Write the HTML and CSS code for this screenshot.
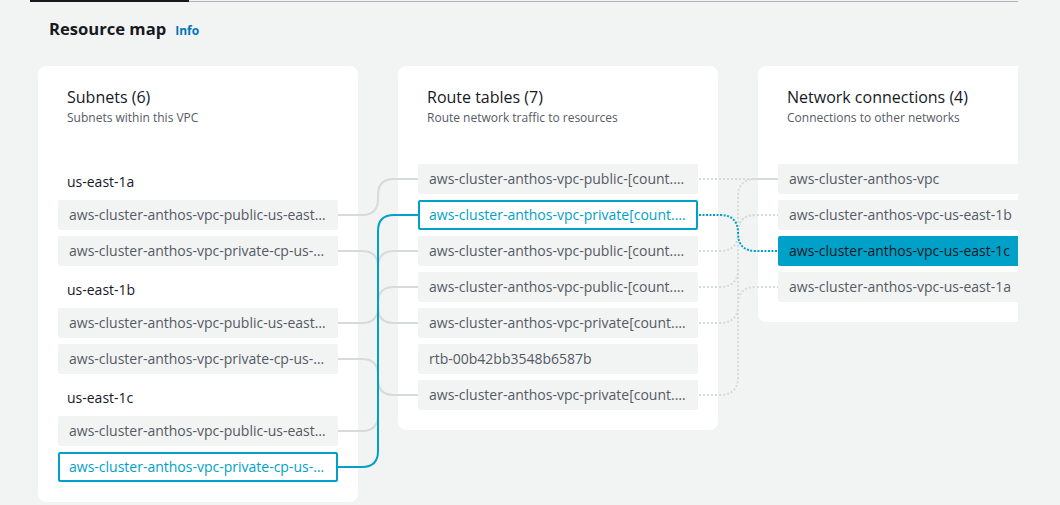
FILE: index.html
```html
<!DOCTYPE html>
<html lang="en">
<head>
<meta charset="utf-8">
<title>Resource map</title>
<link rel="stylesheet" href="styles.css">
</head>
<body>
<div class="page">
  <div class="tabs-rule"><span class="tab-active"></span><span class="tab-rest"></span></div>
  <div class="section-header">
    <h2 class="section-title">Resource map</h2>
    <a class="info-link" href="#">Info</a>
  </div>
  <div class="map">
    <section class="card">
      <header class="card-header">
        <h3 class="card-title">Subnets (6)</h3>
        <p class="card-subtitle">Subnets within this VPC</p>
      </header>
      <div class="list">
        <div class="group-label">us-east-1a</div>
        <div class="item">aws-cluster-anthos-vpc-public-us-east-1a</div>
        <div class="item">aws-cluster-anthos-vpc-private-cp-us-east-1a</div>
        <div class="group-label">us-east-1b</div>
        <div class="item">aws-cluster-anthos-vpc-public-us-east-1b</div>
        <div class="item">aws-cluster-anthos-vpc-private-cp-us-east-1b</div>
        <div class="group-label">us-east-1c</div>
        <div class="item">aws-cluster-anthos-vpc-public-us-east-1c</div>
        <div class="item item-outline">aws-cluster-anthos-vpc-private-cp-us-east-1c</div>
      </div>
    </section>
    <section class="card">
      <header class="card-header">
        <h3 class="card-title">Route tables (7)</h3>
        <p class="card-subtitle">Route network traffic to resources</p>
      </header>
      <div class="list">
        <div class="item">aws-cluster-anthos-vpc-public-[count.index]</div>
        <div class="item item-outline">aws-cluster-anthos-vpc-private[count.index]</div>
        <div class="item">aws-cluster-anthos-vpc-public-[count.index]</div>
        <div class="item">aws-cluster-anthos-vpc-public-[count.index]</div>
        <div class="item">aws-cluster-anthos-vpc-private[count.index]</div>
        <div class="item">rtb-00b42bb3548b6587b</div>
        <div class="item">aws-cluster-anthos-vpc-private[count.index]</div>
      </div>
    </section>
    <section class="card">
      <header class="card-header">
        <h3 class="card-title">Network connections (4)</h3>
        <p class="card-subtitle">Connections to other networks</p>
      </header>
      <div class="list">
        <div class="item">aws-cluster-anthos-vpc</div>
        <div class="item">aws-cluster-anthos-vpc-us-east-1b</div>
        <div class="item item-filled">aws-cluster-anthos-vpc-us-east-1c</div>
        <div class="item">aws-cluster-anthos-vpc-us-east-1a</div>
      </div>
    </section>
    <svg class="links" width="988" height="440" viewBox="0 0 988 440" aria-hidden="true">
      <g transform="translate(-30,-66)" fill="none">
        <g class="link-solid">
          <path d="M338,215 H362 Q378,215 378,199 V195 Q378,179 394,179 H418"/>
          <path d="M338,251 H362 Q378,251 378,267 V307 Q378,323 394,323 H418"/>
          <path d="M338,323 H362 Q378,323 378,307 V303 Q378,287 394,287 H418"/>
          <path d="M338,359 H362 Q378,359 378,375 V379 Q378,395 394,395 H418"/>
          <path d="M338,431 H362 Q378,431 378,415 V267 Q378,251 394,251 H418"/>
        </g>
        <g class="link-dotted">
          <path d="M699,179 H778"/>
          <path d="M699,251 H720 Q738,251 738,233 V197 Q738,179 756,179 H778"/>
          <path d="M699,287 H720 Q738,287 738,269 V233 Q738,215 756,215 H778"/>
          <path d="M699,323 H720 Q738,323 738,305 V233 Q738,215 756,215 H778"/>
          <path d="M699,395 H720 Q738,395 738,377 V305 Q738,287 756,287 H778"/>
        </g>
        <path class="link-active" d="M338,467 H362 Q378,467 378,451 V231 Q378,215 394,215 H418"/>
        <path class="link-active-dotted" d="M699,215 H720 Q738,215 738,233 V233 Q738,251 756,251 H778"/>
      </g>
    </svg>
  </div>
</div>
</body>
</html>
```
FILE: styles.css
```css
* {
  box-sizing: border-box;
}

body {
  margin: 0;
  background: #f2f3f3;
  font-family: "Open Sans", "Noto Sans", sans-serif;
  color: #16191f;
}

.page {
  margin-left: 30px;
  width: 988px;
}

.tabs-rule {
  display: flex;
  height: 2px;
}

.tab-active {
  width: 159px;
  background: #16191f;
}

.tab-rest {
  flex: 1;
  border-bottom: 1px solid #aab7b8;
}

.section-header {
  display: flex;
  align-items: baseline;
  gap: 9px;
  padding: 15px 19px 0;
}

.section-title {
  margin: 0;
  font-size: 16.6px;
  line-height: 24px;
  font-weight: 700;
  color: #16191f;
}

.info-link {
  font-size: 12px;
  font-weight: 700;
  color: #0073bb;
  text-decoration: none;
}

.map {
  position: relative;
  display: flex;
  align-items: flex-start;
  gap: 40px;
  margin-top: 25px;
  padding-left: 8px;
  overflow: hidden;
}

.card {
  flex: 0 0 320px;
  width: 320px;
  min-width: 0;
  background: #ffffff;
  border-radius: 8px;
  padding: 20px;
}

.card-header {
  padding: 0 9px;
  margin-bottom: 38px;
  white-space: nowrap;
}

.card-title {
  margin: 0;
  font-size: 16px;
  line-height: 22px;
  font-weight: 400;
  color: #16191f;
}

.card-subtitle {
  margin: 2px 0 0;
  font-size: 12px;
  line-height: 16px;
  color: #545b64;
}

.list {
  display: flex;
  flex-direction: column;
  gap: 6px;
  min-width: 0;
}

.group-label {
  margin: 8px 0 2px;
  padding-left: 9px;
  font-size: 14px;
  line-height: 20px;
  color: #16191f;
}

.item {
  min-width: 0;
  height: 30px;
  padding: 0 11px;
  background: #f2f3f3;
  border-radius: 2px;
  font-size: 14px;
  line-height: 30px;
  color: #545b64;
  white-space: nowrap;
  overflow: hidden;
  text-overflow: ellipsis;
}

.item-outline {
  background: #ffffff;
  border: 2px solid #00a1c9;
  padding: 0 9px;
  line-height: 26px;
  color: #00a1c9;
}

.item-filled {
  background: #00a1c9;
  color: #16191f;
}

.links {
  position: absolute;
  left: 0;
  top: 0;
  pointer-events: none;
}

.link-solid path {
  stroke: #d5dbdb;
  stroke-width: 2;
}

.link-dotted path {
  stroke: #d5dbdb;
  stroke-width: 2;
  stroke-dasharray: 2 2;
}

.link-active {
  stroke: #00a1c9;
  stroke-width: 2;
}

.link-active-dotted {
  stroke: #00a1c9;
  stroke-width: 2;
  stroke-dasharray: 2 1.5;
}
```
